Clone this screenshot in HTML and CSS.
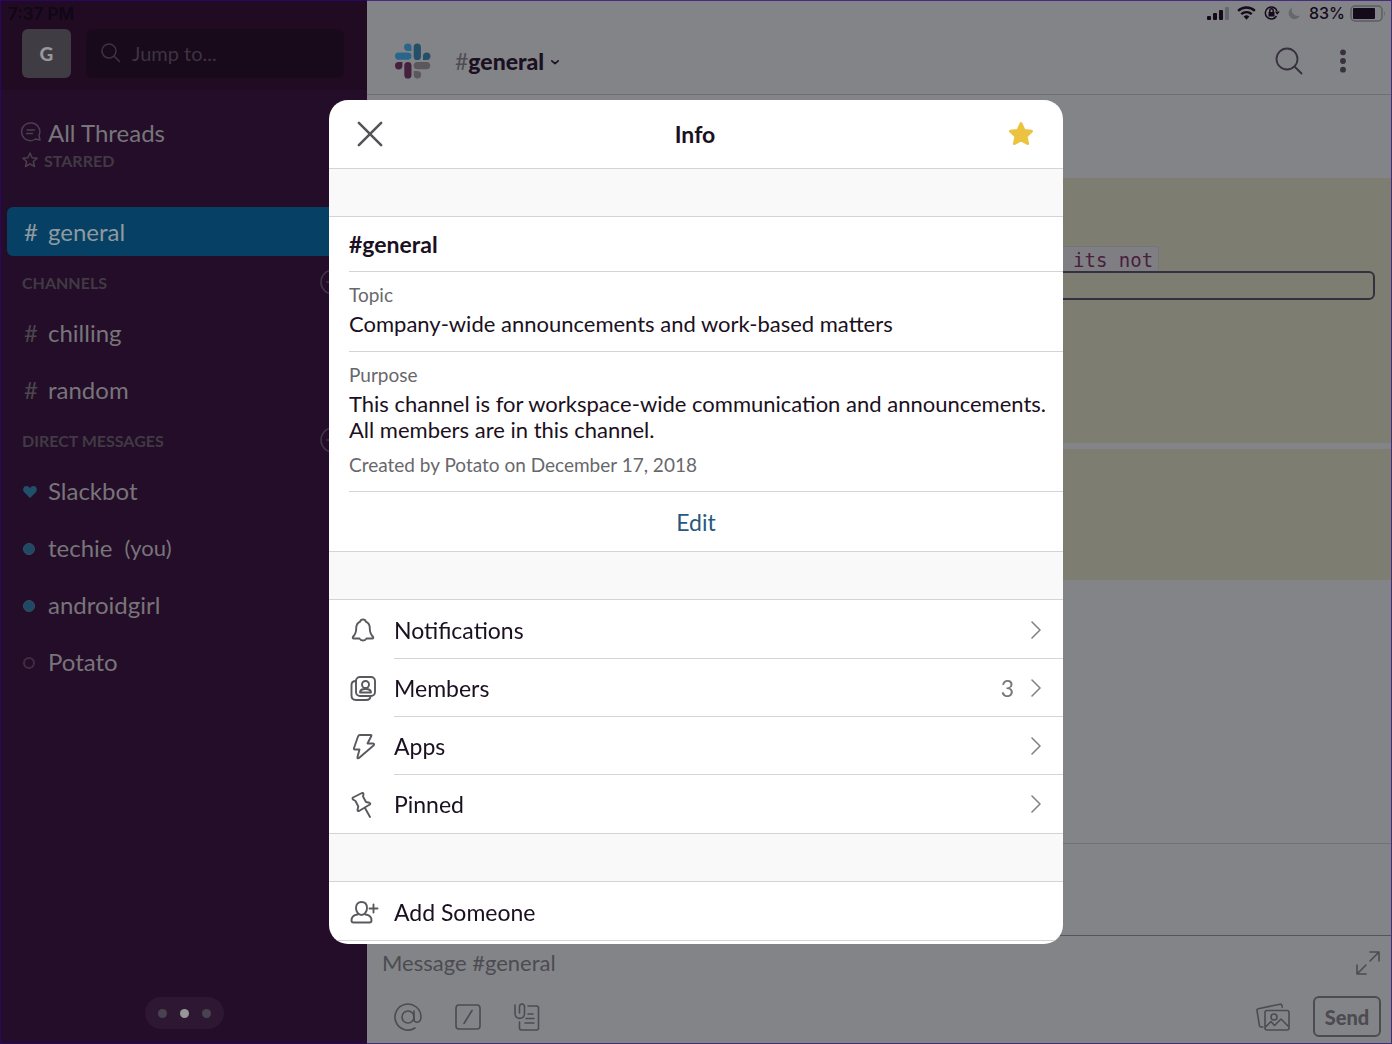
FILE: index.html
```html
<!DOCTYPE html>
<html lang="en">
<head>
<meta charset="utf-8">
<meta name="viewport" content="width=device-width, initial-scale=1">
<title>#general - Info</title>
<link rel="stylesheet" href="styles.css">
</head>
<body>
<div class="app">
  <aside class="sidebar">
    <header class="side-head">
      <time class="clock">7:37 PM</time>
      <div class="side-tools">
        <button class="workspace" type="button">G</button>
        <label class="jump">
          <svg width="20" height="20" viewBox="0 0 20 20" aria-hidden="true"><circle cx="8" cy="8" r="7"/><path d="M13 13l5.500 5.500"/></svg>
          <input type="text" placeholder="Jump to..." aria-label="Jump to">
        </label>
      </div>
    </header>
    <nav class="side-nav">
      <a class="threads" href="#"><svg width="20" height="20" viewBox="0 0 20 20" aria-hidden="true"><path d="M9.500 1a8.800 8.800 0 1 0 5 16l4.500 1-1-4.500A8.800 8.800 0 0 0 9.500 1zM6 8h7.500M5.500 11.500h6"/></svg>All Threads</a>
      <h2 class="starred"><svg width="16" height="16" viewBox="0 0 16 16" aria-hidden="true"><path d="M8 1l2.100 4.700 5 .5-3.800 3.300 1.200 5L8 11.900l-4.500 2.600 1.200-5L.9 6.200l5-.5z"/></svg>STARRED</h2>
      <a class="item active" href="#"><span class="mark">#</span>general</a>
      <h2 class="group">CHANNELS <button type="button" aria-label="Add channel"><svg width="26" height="26" viewBox="0 0 26 26"><circle cx="13" cy="13" r="12"/><path d="M7 13h12M13 7v12"/></svg></button></h2>
      <a class="item" href="#"><span class="mark">#</span>chilling</a>
      <a class="item" href="#"><span class="mark">#</span>random</a>
      <h2 class="group">DIRECT MESSAGES <button type="button" aria-label="New message"><svg width="26" height="26" viewBox="0 0 26 26"><circle cx="13" cy="13" r="12"/><path d="M7 13h12M13 7v12"/></svg></button></h2>
      <a class="item" href="#"><span class="mark"><svg width="14" height="12" viewBox="0 0 14 12" aria-hidden="true"><path class="heart" d="M7 12L1 6C-1 3 1 0 3.500 0 5.500 0 6.500 1 7 2.500 7.500 1 8.500 0 10.500 0 13 0 15 3 13 6z"/></svg></span>Slackbot</a>
      <a class="item" href="#"><span class="mark"><i class="presence"></i></span>techie <small>(you)</small></a>
      <a class="item" href="#"><span class="mark"><i class="presence"></i></span>androidgirl</a>
      <a class="item" href="#"><span class="mark"><i class="presence away"></i></span>Potato</a>
    </nav>
    <div class="pager"><i></i><i class="on"></i><i></i></div>
  </aside>

  <main class="main">
    <header class="main-head">
      <div class="status">
        <svg width="22" height="13" viewBox="0 0 22 13" aria-hidden="true"><rect y="9" width="4" height="4" rx="1"/><rect x="6" y="6" width="4" height="7" rx="1"/><rect x="12" y="3" width="4" height="10" rx="1"/><rect class="dim" x="18" width="4" height="13" rx="1"/></svg>
        <svg width="19" height="14" viewBox="0 0 20 14" aria-hidden="true"><path d="M10 14l-3-3.200a4.500 4.500 0 0 1 6 0z"/><path class="arc" d="M4.500 8.300a8 8 0 0 1 11 0M1.200 4.800a12.700 12.700 0 0 1 17.600 0"/></svg>
        <svg width="16" height="16" viewBox="0 0 16 16" aria-hidden="true"><path class="ring" d="M12.500 11A6 6 0 1 1 13 6"/><path d="M10.800 6.500h5l-2.500 3.300zM4.500 7h6v4.500h-6z"/><path class="ring" d="M5.800 7V5.500a1.700 1.700 0 0 1 3.400 0V7"/></svg>
        <svg width="13" height="14" viewBox="0 0 14 14" aria-hidden="true"><path class="dim" d="M4.500 1A6.500 6.500 0 1 0 13 9.700 6.600 6.600 0 0 1 4.500 1z"/></svg>
        <span>83%</span>
        <svg class="battery" width="36" height="17" viewBox="0 0 36 17" aria-hidden="true"><rect class="case" x="1" y="1" width="31" height="15" rx="4"/><rect x="3" y="3" width="22" height="11" rx="1"/><path class="dim" d="M34 6q2 2.500 0 5z"/></svg>
      </div>
      <div class="channel-bar">
        <svg class="logo" width="36" height="36" viewBox="0 0 36 36" aria-hidden="true">
          <g class="c1"><path d="M16.500 8h-3.700A3.700 3.700 0 1 1 16.500 4.300z"/><rect y="9.500" width="16.500" height="7.200" rx="3.600"/></g>
          <g class="c2"><rect x="18.700" y="0.500" width="7.200" height="16.500" rx="3.600"/><path d="M28 17v-3.700a3.700 3.700 0 1 1 3.700 3.700z"/></g>
          <g class="c3"><path d="M7.400 19v3.700A3.700 3.700 0 1 1 3.700 19z"/><rect x="9.300" y="19" width="7.200" height="16.500" rx="3.600"/></g>
          <g class="c4"><rect x="18.700" y="19" width="16.500" height="7.200" rx="3.600"/><path d="M18.700 28h3.700a3.700 3.700 0 1 1-3.700 3.700z"/></g>
        </svg>
        <button class="channel" type="button"><span class="hash">#</span>general<svg width="8" height="5" viewBox="0 0 10 6" aria-hidden="true"><path d="M1 1l4 3.500L9 1"/></svg></button>
        <button class="icon-btn push" type="button" aria-label="Search"><svg width="28" height="28" viewBox="0 0 28 28"><circle cx="12" cy="12" r="10.500"/><path d="M19.500 19.500L26.500 26.500"/></svg></button>
        <button class="icon-btn more" type="button" aria-label="More"><svg width="8" height="24" viewBox="0 0 8 24"><circle cx="4" cy="3.300" r="2.900"/><circle cx="4" cy="12" r="2.900"/><circle cx="4" cy="20.700" r="2.900"/></svg></button>
      </div>
    </header>
    <section class="messages">
      <article class="message first">
        <code>its not</code>
        <div class="block"></div>
      </article>
      <article class="message second"></article>
    </section>
    <div class="strip"></div>
    <form class="composer">
      <div class="compose-line">
        <input type="text" placeholder="Message #general" aria-label="Message #general">
        <button type="button" aria-label="Expand"><svg width="24" height="24" viewBox="0 0 24 24"><path d="M14 1h9v9M23 1l-9 9M1 14v9h9M1 23l9-9"/></svg></button>
      </div>
      <div class="compose-tools">
        <button type="button" aria-label="Mention"><svg width="28" height="28" viewBox="0 0 28 28"><circle cx="14" cy="14" r="6"/><path d="M20 8v8.500c0 4 7 4 7-2.500A13 13 0 1 0 21 25"/></svg></button>
        <button type="button" aria-label="Command"><svg width="26" height="26" viewBox="0 0 26 26"><rect x="1" y="1" width="24" height="24" rx="3"/><path d="M17 6.500L9 19.500"/></svg></button>
        <button type="button" aria-label="Attach"><svg width="26" height="28" viewBox="0 0 26 28"><path d="M1 2v8.500c0 6.500 9.500 6.500 9.500 0V4c0-4-5-4-5 0v6M14 3h8.500q2 0 2 2v20q0 2-2 2H7.500q-2 0-2-2v-6M14 11h5M12 15.500h8M11 20h9"/></svg></button>
        <button class="push" type="button" aria-label="Photos"><svg width="34" height="28" viewBox="0 0 34 28"><rect x="9" y="7.500" width="24" height="19.500" rx="2"/><path d="M7 24H5q-1.300 0-1.600-1.500L1 7.500Q.8 6 2.300 5.700L24 1.200q2-.3 2.300 3M10 23.500l5-5 3.500 4 6.500-6.500 7 7"/><circle cx="18" cy="14" r="3"/></svg></button>
        <button class="send" type="submit">Send</button>
      </div>
    </form>
  </main>
</div>

<div class="overlay">
  <section class="dialog" role="dialog" aria-labelledby="dialog-title">
    <header class="dialog-head">
      <button type="button" aria-label="Close"><svg class="close" width="26" height="26" viewBox="0 0 28 28"><path d="M2 2l24 24M26 2L2 26"/></svg></button>
      <h1 id="dialog-title">Info</h1>
      <button type="button" aria-label="Starred"><svg class="star" width="28" height="28" viewBox="0 0 28 28"><path d="M14 3.500l3.200 7 7.300.7-5.500 5.100 1.600 7.200L14 20l-6.600 3.500L9 16.300l-5.500-5.100 7.300-.7z"/></svg></button>
    </header>
    <div class="gap"></div>
    <div class="about">
      <h2 class="name">#general</h2>
      <div class="field"><h3>Topic</h3><p>Company-wide announcements and work-based matters</p></div>
      <div class="field"><h3>Purpose</h3><p>This channel is for workspace-wide communication and announcements. All members are in this channel.</p><p class="created">Created by Potato on December 17, 2018</p></div>
      <button class="edit" type="button">Edit</button>
    </div>
    <div class="gap"></div>
    <ul class="rows">
      <li><a href="#"><svg width="28" height="28" viewBox="0 0 28 28" aria-hidden="true"><path d="M14 2.500c-1.800 0-2.600.8-2.900 2.200C8 6 7.200 8.700 7.200 11.500c0 4-.9 6-3.200 8.200q-.8 1.800.8 1.800h5.700c.6 1.400 1.600 2 3.500 2s2.900-.6 3.500-2h5.700q1.600 0 .8-1.800c-2.300-2.200-3.200-4.200-3.200-8.200 0-2.800-.8-5.500-3.900-6.800-.3-1.400-1.100-2.200-2.900-2.200z"/></svg><span class="label">Notifications<svg class="chev" width="10" height="18" viewBox="0 0 10 18"><path d="M1 1l8 8-8 8"/></svg></span></a></li>
      <li><a href="#"><svg width="28" height="28" viewBox="0 0 28 28" aria-hidden="true"><rect x="7" y="2" width="19" height="19" rx="4"/><path d="M7 6c-3 0-4.500 1.500-4.500 4v10.500q0 4.500 4.500 4.500h10c3 0 4.500-1.500 4.500-4M11 17.500c0-3 2-3.500 5.500-3.500s5.500.5 5.500 3.500z"/><circle cx="16.500" cy="9.500" r="3.500"/></svg><span class="label">Members<span class="count">3</span><svg class="chev" width="10" height="18" viewBox="0 0 10 18"><path d="M1 1l8 8-8 8"/></svg></span></a></li>
      <li><a href="#"><svg width="28" height="28" viewBox="0 0 28 28" aria-hidden="true"><path d="M11 2h10.500q1.500 0 .7 1.300L18.500 10.500H24q2 .5.5 2L10 25q-2 1-1.500-1l2-7.500H6q-1.500 0-1-1.500l4-11.500Q9.500 2 11 2z"/></svg><span class="label">Apps<svg class="chev" width="10" height="18" viewBox="0 0 10 18"><path d="M1 1l8 8-8 8"/></svg></span></a></li>
      <li><a href="#"><svg width="28" height="28" viewBox="0 0 28 28" aria-hidden="true"><path d="M4 6.500L13 2q1.500-.3 1.500 1l-.5 2.500 3 5.500 3.500.8q1.500.7.3 1.700L10 20q-1.500.3-1.500-1l.8-3.500L6.500 10 4 8.500q-1-1 0-2zM16 17l5 9"/></svg><span class="label">Pinned<svg class="chev" width="10" height="18" viewBox="0 0 10 18"><path d="M1 1l8 8-8 8"/></svg></span></a></li>
    </ul>
    <div class="gap"></div>
    <ul class="rows">
      <li><a href="#"><svg width="28" height="28" viewBox="0 0 28 28" aria-hidden="true"><path d="M12.500 3c3.500 0 5.500 2.500 5.500 6 0 3.800-2.500 7-5.500 7S7 12.800 7 9c0-3.500 2-6 5.500-6zM8.500 15.500C4.500 16 2.500 18 2.500 21.500q0 2 2 2h16q2 0 2-2c0-3.500-2-5.500-6-6M24.500 5.500v8M20.500 9.500h8"/></svg><span class="label">Add Someone</span></a></li>
    </ul>
  </section>
</div>
</body>
</html>
```
FILE: styles.css
```css
* { box-sizing: border-box; }
html, body { height: 100%; }
body { margin: 0; font-family: Lato, "Liberation Sans", sans-serif; color: #1b1021; }
button, input { font: inherit; color: inherit; background: none; border: 0; padding: 0; }
button { display: flex; align-items: center; justify-content: center; }
h1, h2, h3, p, ul { margin: 0; padding: 0; font-weight: 400; }
a { color: inherit; text-decoration: none; }
svg { display: block; flex: none; overflow: visible; fill: none; stroke: currentColor; stroke-width: 2; stroke-linecap: round; stroke-linejoin: round; }
.push { margin-left: auto; }

.app { display: grid; grid-template-columns: 367px 1fr; min-height: 100%; }

/* Sidebar */
.sidebar { display: flex; flex-direction: column; background: #240d28; color: #77757a; border: solid #2b0562; border-width: 1px 0 1px 1px; }
.side-head { height: 89px; background: #200b23; padding: 3px 23px 0 7px; }
.clock { display: block; font: 600 17px/20px Inter, sans-serif; color: #110615; }
.side-tools { display: flex; gap: 15px; padding: 5px 0 0 14px; }
.workspace { width: 49px; height: 49px; border-radius: 6px; background: #3f3c43; color: #98979b; font-size: 19px; font-weight: 900; }
.jump { flex: 1; display: flex; align-items: center; gap: 11px; min-width: 0; height: 49px; padding: 0 0 2px 15px; border-radius: 7px; background: #180a1b; color: #3d3440; }
.jump svg { stroke-width: 1.500; }
.jump input { flex: 1; min-width: 0; font-size: 20px; }
input::placeholder { color: inherit; opacity: 1; }
.side-nav { display: flex; flex-direction: column; padding-top: 26px; font-size: 24px; }
.threads { display: flex; align-items: center; gap: 7px; height: 32px; padding-left: 20px; }
.threads svg, .starred svg { color: #4a404d; stroke-width: 1.500; }
.starred { display: flex; align-items: center; gap: 6px; height: 24px; margin-bottom: 31px; padding-left: 21px; font-size: 16px; font-weight: 700; color: #413a44; }
.item { display: flex; align-items: center; height: 49px; margin: 4px 0 4px 6px; padding-left: 15px; border-radius: 6px 0 0 6px; }
.item small { margin-left: 12px; font-size: 22px; }
.mark { display: flex; align-items: center; width: 26px; padding-left: 2px; color: #4a464d; }
.active { background: #064064; color: #8e9a9f; }
.active .mark { color: inherit; }
.group { display: flex; align-items: center; justify-content: space-between; height: 44px; padding: 0 21px; font-size: 16px; font-weight: 700; color: #413a44; }
.group svg { stroke-width: 1.500; }
.mark svg, .presence { margin: 2px 0 0 -1px; }
.heart { fill: #21516a; stroke: none; }
.presence { width: 12px; height: 12px; border-radius: 50%; background: #1f4a67; border: 1px solid #36505a; }
.presence.away { background: none; border: 2px solid #3f2e43; }
.pager { display: flex; align-items: center; justify-content: space-between; align-self: center; width: 79px; height: 32px; margin: auto 0 14px; padding: 0 13px; border-radius: 16px; background: #2d1732; }
.pager i { width: 9px; height: 9px; border-radius: 50%; background: #494350; }
.pager .on { background: #97979a; }

/* Conversation */
.main { display: flex; flex-direction: column; min-width: 0; background: #838488; border: solid #472b7c; border-width: 1px 1px 1px 0; }
.main-head { height: 94px; padding: 2px 10px 0 28px; border-bottom: 1px solid #6e6f73; }
.status { display: flex; align-items: center; justify-content: flex-end; gap: 8px; height: 20px; font: 500 16px/20px Inter, sans-serif; color: #150a1a; }
.status svg { fill: currentColor; stroke: none; }
.status .dim { fill: #66666b; }
.status .arc, .status .ring { fill: none; stroke: currentColor; stroke-width: 2.500; stroke-linecap: butt; }
.status .ring { stroke-width: 1.500; }
.status .case { fill: none; stroke: #5c5c61; stroke-width: 1.500; }
.status .battery { margin: 0 -5px 0 -3px; }
.channel-bar { display: flex; align-items: center; padding-top: 20px; }
.logo { stroke: none; }
.c1 { fill: #2a658b; } .c2 { fill: #244f69; } .c3 { fill: #45213f; } .c4 { fill: #5a585a; }
.channel { margin-left: 24px; font-size: 23px; font-weight: 900; }
.channel svg { margin: 3px 0 0 7px; }
.hash { font-weight: 400; color: #4e4c52; }
.icon-btn { color: #37303d; }
.icon-btn svg { stroke-width: 1.800; }
.more { margin: 0 34px 0 36px; }
.more svg { fill: currentColor; stroke: none; }
.messages { flex: 1; padding-top: 83px; }
.message { background: #7e7d72; }
.first { height: 265px; padding: 68px 16px 0 60px; }
.second { height: 131px; margin-top: 6px; }
.message code { display: block; width: max-content; height: 25px; margin-left: 630px; padding: 0 5px 0 15px; border: 1px solid #74757a; border-bottom: 0; border-radius: 3px; background: #7f7f83; font: 19px/27px "DejaVu Sans Mono", monospace; color: #48203d; }
.block { height: 29px; border: 2px solid #35303f; border-radius: 6px; }
.strip { height: 92px; border-top: 1px solid #707175; }
.composer { padding: 12px 11px 6px 15px; border-top: 1px solid #57575b; color: #4c4b51; }
.compose-line { display: flex; align-items: center; height: 30px; }
.compose-line input { flex: 1; min-width: 0; font-size: 22px; line-height: 30px; }
.compose-line svg, .compose-tools svg { stroke-width: 1.600; }
.compose-tools { display: flex; align-items: center; gap: 33px; padding: 18px 0 0 12px; }
.compose-tools .send { width: 68px; height: 41px; margin: 0 -1px 0 -10px; border: 2px solid #4c4b51; border-radius: 6px; font-size: 20px; font-weight: 900; }

/* Info dialog */
.overlay { position: fixed; inset: 0; display: flex; justify-content: center; align-items: center; padding: 100px 20px; }
.dialog { width: 734px; max-width: 100%; height: 100%; overflow: hidden; border-radius: 19px; background: #fff; }
.dialog-head { display: flex; align-items: center; justify-content: space-between; height: 68px; padding: 0 28px; }
.dialog-head h1 { font-size: 23px; font-weight: 700; }
.close { color: #56555a; stroke-width: 2.800; }
.star { fill: #ecc341; stroke: #ecc341; stroke-width: 3; }
.gap { height: 49px; background: #f9f9f9; border: solid #d4d4d5; border-width: 1px 0; }
.name { height: 54px; margin-left: 20px; font-size: 23px; line-height: 55px; font-weight: 700; }
.field { margin-left: 20px; padding: 10px 10px 14px 0; border-top: 1px solid #d4d4d5; }
.field h3 { font-size: 19px; line-height: 26px; color: #68676c; }
.field p { margin-top: 3px; font-size: 22px; line-height: 26px; }
.field .created { margin-top: 10px; font-size: 19px; line-height: 24px; color: #68676c; }
.edit { width: calc(100% - 20px); height: 60px; margin-left: 20px; padding-right: 20px; border-top: 1px solid #d4d4d5; font-size: 23px; color: #28597c; }
.rows { list-style: none; padding-bottom: 1px; }
.rows a { display: flex; align-items: center; gap: 17px; height: 58px; padding-left: 20px; font-size: 23px; }
.rows a > svg { margin-top: 3px; color: #5a595e; stroke-width: 1.900; }
.rows li + li .label { border-top: 1px solid #d4d4d5; }
.label { flex: 1; display: flex; align-items: center; height: 100%; padding: 1px 22px 0 0; }
.count { margin-left: auto; margin-right: 17px; color: #77767b; }
.chev { margin-left: auto; color: #838287; stroke-width: 1.600; }
.count + .chev { margin-left: 0; }
.rows:last-child { padding: 0; border-bottom: 1px solid #d4d4d5; }
```
